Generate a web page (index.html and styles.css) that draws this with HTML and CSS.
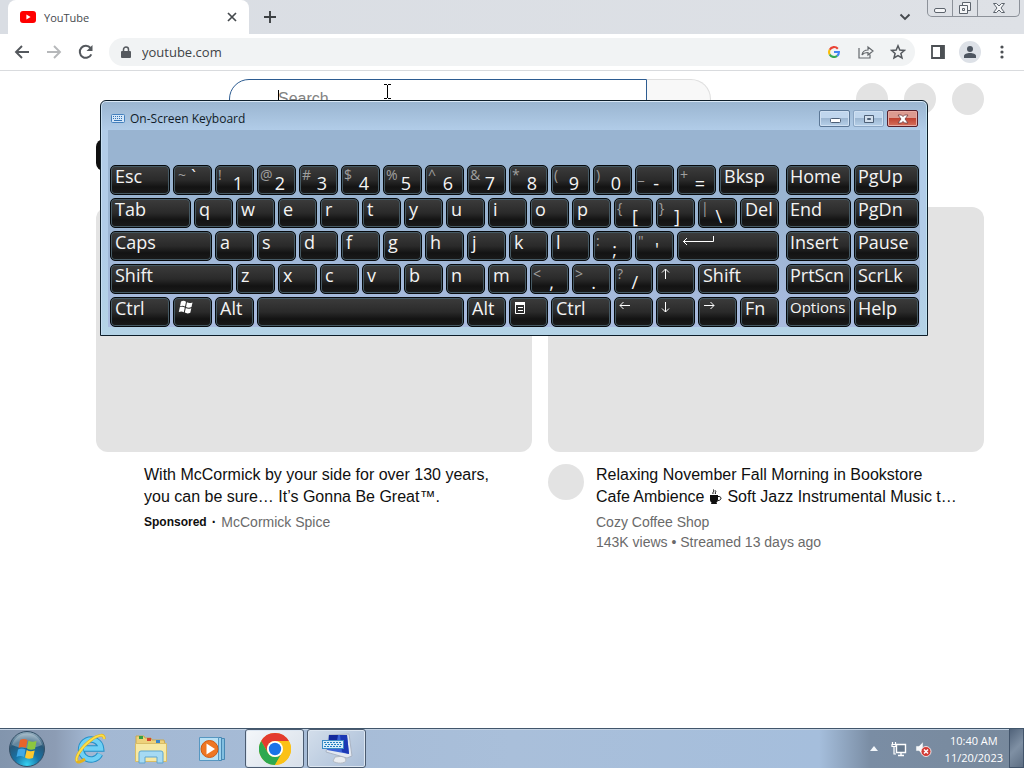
FILE: index.html
```html
<!DOCTYPE html>
<html lang="en">
<head>
<meta charset="utf-8">
<title>YouTube</title>
<link rel="stylesheet" href="styles.css">
</head>
<body>
<div class="desktop">
  <header class="tab-strip">
    <div class="tab">
      <svg class="tab-logo" width="16" height="12" viewBox="0 0 16 12"><rect width="16" height="12" rx="3" fill="#f00"/><path d="M6.4 3.5 10.6 6 6.4 8.500z" fill="#fff"/></svg>
      <span class="tab-title">YouTube</span>
      <button class="icon-btn" aria-label="Close tab"><svg width="10" height="10" viewBox="0 0 10 10"><path d="M1 1l8 8M9 1l-8 8" stroke="#45494d" stroke-width="1.7"/></svg></button>
    </div>
    <button class="icon-btn new-tab" aria-label="New tab"><svg width="14" height="14" viewBox="0 0 14 14"><path d="M7 1v12M1 7h12" stroke="#3c4043" stroke-width="1.900"/></svg></button>
    <button class="icon-btn tab-search" aria-label="Search tabs"><svg width="12" height="8" viewBox="0 0 12 8"><path d="M1.500 1.500 6 6l4.500-4.500" fill="none" stroke="#45494d" stroke-width="1.900"/></svg></button>
    <div class="caption-buttons">
      <button class="caption" aria-label="Minimize"><svg width="14" height="16" viewBox="0 0 14 16"><rect x="1.500" y="8.500" width="11" height="4" rx="1.500" fill="#f5f6f8" stroke="#5d646d"/></svg></button>
      <button class="caption" aria-label="Restore"><svg width="14" height="16" viewBox="0 0 14 16"><path d="M4.500 2.500h8v8h-8z" fill="#f5f6f8" stroke="#5d646d"/><path d="M1.500 5.500h8v8h-8z" fill="#f5f6f8" stroke="#5d646d"/><path d="M4.500 8.500h2v2h-2z" fill="none" stroke="#5d646d"/></svg></button>
      <button class="caption caption-close" aria-label="Close"><svg width="14" height="16" viewBox="0 0 14 16"><path d="M1.500 3.500h3L7 6l2.500-2.500h3L9 8l3.500 4.500h-3L7 10l-2.500 2.500h-3L5 8z" fill="#f5f6f8" stroke="#5d646d"/></svg></button>
    </div>
  </header>

  <nav class="toolbar">
    <button class="icon-btn tool" aria-label="Back"><svg width="16" height="14" viewBox="0 0 16 14"><path d="M15 7H2M8 1 2 7l6 6" fill="none" stroke="#54585d" stroke-width="1.900"/></svg></button>
    <button class="icon-btn tool" aria-label="Forward"><svg width="16" height="14" viewBox="0 0 16 14"><path d="M1 7h13M8 1l6 6-6 6" fill="none" stroke="#b6b8ba" stroke-width="1.900"/></svg></button>
    <button class="icon-btn tool" aria-label="Reload"><svg width="16" height="16" viewBox="0 0 16 16"><path d="M13.300 10.300A6 6 0 1 1 12.500 4" fill="none" stroke="#54585d" stroke-width="2"/><path d="M14.500 1v6h-6z" fill="#54585d"/></svg></button>
    <div class="omnibox">
      <svg width="10" height="13" viewBox="0 0 10 13"><path d="M2.500 5.500V3.500a2.500 2.500 0 0 1 5 0v2" fill="none" stroke="#55595e" stroke-width="1.500"/><rect x="0" y="5" width="10" height="7" rx="1" fill="#55595e"/></svg>
      <input class="url" aria-label="Address" value="youtube.com">
      <button class="icon-btn tool" aria-label="Search with Google"><svg width="12" height="12" viewBox="0 0 12 12" fill="none" stroke-width="2.100"><path d="M9.800 2.700A5 5 0 0 0 1.700 3.700" stroke="#ea4335"/><path d="M1.700 3.700a5 5 0 0 0 0 4.700" stroke="#fbbc05"/><path d="M1.700 8.400a5 5 0 0 0 7.500 1.500" stroke="#34a853"/><path d="M9.200 9.900A5 5 0 0 0 10.900 6H6" stroke="#4285f4"/></svg></button>
      <button class="icon-btn tool" aria-label="Share"><svg width="16" height="14" viewBox="0 0 16 14"><path d="M1 3v10h11V9.500M4 10c.5-3.500 2.500-5 6-5V2l5 4-5 4V7.500C7.500 7.500 5.500 8 4 10z" fill="none" stroke="#64686c" stroke-width="1.200"/></svg></button>
      <button class="icon-btn tool" aria-label="Bookmark"><svg width="16" height="16" viewBox="0 0 16 16"><path d="M8 1.800l1.800 4.200 4.600.4-3.500 3 1.100 4.500L8 11.500l-4 2.400 1.100-4.500-3.500-3L6.200 6z" fill="none" stroke="#54585d" stroke-width="1.500"/></svg></button>
    </div>
    <button class="icon-btn tool" aria-label="Side panel"><svg width="14" height="14" viewBox="0 0 14 14"><path d="M1 1h12v12H1z" fill="none" stroke="#4c5054" stroke-width="1.800"/><path d="M9 1h4v12H9z" fill="#4c5054"/></svg></button>
    <button class="icon-btn tool" aria-label="Profile"><svg width="22" height="22" viewBox="0 0 22 22"><circle cx="11" cy="11" r="11" fill="#dde1e7"/><circle cx="11" cy="8" r="3" fill="#4d5560"/><path d="M5 17v-2c0-2 3-3 6-3s6 1 6 3v2z" fill="#4d5560"/></svg></button>
    <button class="icon-btn tool" aria-label="Menu"><svg width="4" height="14" viewBox="0 0 4 14" fill="#4c5054"><circle cx="2" cy="2" r="1.600"/><circle cx="2" cy="7" r="1.600"/><circle cx="2" cy="12" r="1.600"/></svg></button>
  </nav>

  <main class="page">
    <div class="masthead">
      <form class="search">
        <input class="search-input" aria-label="Search" placeholder="Search">
        <button class="search-btn" type="button" aria-label="Submit search"></button>
      </form>
      <div class="dots"><span class="dot"></span><span class="dot"></span><span class="dot"></span></div>
    </div>
    <div class="chips"><button class="chip">All</button></div>
    <section class="videos">
      <article class="video">
        <div class="thumb"></div>
        <div class="details">
          <span class="avatar avatar-blank"></span>
          <div class="info">
            <h3 class="title">With McCormick by your side for over 130 years, you can be sure… It’s Gonna Be Great™.</h3>
            <p class="meta"><b class="sponsored">Sponsored</b><b>·</b><span>McCormick Spice</span></p>
          </div>
        </div>
      </article>
      <article class="video">
        <div class="thumb"></div>
        <div class="details">
          <span class="avatar"></span>
          <div class="info">
            <h3 class="title">Relaxing November Fall Morning in Bookstore Cafe Ambience <svg class="cup" width="14" height="16" viewBox="0 0 14 16"><path d="M1 6h8v4.500a3 3 0 0 1-1.500 3l.5 1.500H2l.5-1.500A3 3 0 0 1 1 10.500z" fill="#0f0f0f"/><path d="M9 7.500c4-.5 4 4 0 4M4 5c-1-2 2-2 .5-4.500M6.500 5c-1-1.500 1-2 0-3.500" fill="none" stroke="#0f0f0f"/></svg> Soft Jazz Instrumental Music t…</h3>
            <p class="meta">Cozy Coffee Shop</p>
            <p class="meta meta-next">143K views • Streamed 13 days ago</p>
          </div>
        </div>
      </article>
    </section>
    <span class="caret"></span>
    <svg class="ibeam" width="9" height="17" viewBox="0 0 9 17"><path d="M1 1.500h3M5 1.500h3M4.500 2v13M1 15.500h3M5 15.500h3" stroke="#000" fill="none"/></svg>
  </main>

  <section class="osk" aria-label="On-Screen Keyboard">
    <div class="osk-bar">
      <svg width="14" height="9" viewBox="0 0 14 9"><rect x=".5" y=".5" width="13" height="8" rx="1" fill="#d4e6f8" stroke="#4580bd"/><path d="M2 2.500h10M2 4.500h10" stroke="#3474b5" stroke-dasharray="1 1"/><path d="M3 6.500h8" stroke="#3474b5"/></svg>
      <span class="osk-title">On-Screen Keyboard</span>
      <button class="osk-btn" aria-label="Minimize"><svg width="12" height="12" viewBox="0 0 12 12"><rect x="1.500" y="5.500" width="10" height="4" rx="1" fill="#fff" stroke="#4d5f76"/></svg></button>
      <button class="osk-btn osk-max" aria-label="Maximize"><svg width="12" height="12" viewBox="0 0 12 12"><path d="M1.500 2.500h9v7h-9z" fill="#d3e0ee" stroke="#4d5f76"/><path d="M4.500 5.500h3v1h-3z" fill="#fff" stroke="#4d5f76"/></svg></button>
      <button class="osk-btn osk-close" aria-label="Close"><svg width="12" height="12" viewBox="0 0 12 12"><path d="M1 2h3.500L6 3.600 7.500 2H11L8 6l3 4H7.500L6 8.400 4.500 10H1l3-4z" fill="#fff" stroke="#6b3a40" stroke-width=".8"/></svg></button>
    </div>
    <div class="osk-body">
      <div class="keys">
        <button class="key w3">Esc</button><button class="key flat"><small>~</small><span>`</span></button><button class="key dual"><small>!</small><span>1</span></button><button class="key dual"><small>@</small><span>2</span></button><button class="key dual"><small>#</small><span>3</span></button><button class="key dual"><small>$</small><span>4</span></button><button class="key dual"><small>%</small><span>5</span></button><button class="key dual"><small>^</small><span>6</span></button><button class="key dual"><small>&amp;</small><span>7</span></button><button class="key dual"><small>*</small><span>8</span></button><button class="key dual"><small>(</small><span>9</span></button><button class="key dual"><small>)</small><span>0</span></button><button class="key dual punct"><small>_</small><span>-</span></button><button class="key dual"><small>+</small><span>=</span></button><button class="key w3">Bksp</button>
        <button class="key w4">Tab</button><button class="key">q</button><button class="key">w</button><button class="key">e</button><button class="key">r</button><button class="key">t</button><button class="key">y</button><button class="key">u</button><button class="key">i</button><button class="key">o</button><button class="key">p</button><button class="key dual punct"><small>{</small><span>[</span></button><button class="key dual punct"><small>}</small><span>]</span></button><button class="key dual punct"><small>|</small><span>\</span></button><button class="key">Del</button>
        <button class="key w5">Caps</button><button class="key">a</button><button class="key">s</button><button class="key">d</button><button class="key">f</button><button class="key">g</button><button class="key">h</button><button class="key">j</button><button class="key">k</button><button class="key">l</button><button class="key dual punct"><small>:</small><span>;</span></button><button class="key dual punct"><small>"</small><span>'</span></button><button class="key w5" aria-label="Enter"><svg width="32" height="18" viewBox="0 0 32 18"><path d="M31.500 4v5.500H1M5 6 1.500 9.500 5 13" fill="none" stroke="#fff"/></svg></button>
        <button class="key w6">Shift</button><button class="key">z</button><button class="key">x</button><button class="key">c</button><button class="key">v</button><button class="key">b</button><button class="key">n</button><button class="key">m</button><button class="key dual punct"><small>&lt;</small><span>,</span></button><button class="key dual punct"><small>&gt;</small><span>.</span></button><button class="key dual punct"><small>?</small><span>/</span></button><button class="key" aria-label="Up"><svg width="10" height="18" viewBox="0 0 10 18"><path d="M4.500 14V4M1 7.500 4.500 4 8 7.500" fill="none" stroke="#fff"/></svg></button><button class="key w4">Shift</button>
        <button class="key w3">Ctrl</button><button class="key" aria-label="Windows"><svg width="16" height="18" viewBox="0 0 16 18" fill="#fff"><path d="M3 3.500c2-1 3.500-.8 5 .2L7 8.500c-1.500-1-3-1-5-.3zM9 4.200c1.500 1 3.200 1 5.500.2l-1 4.700c-2 .8-4 .7-5.500-.2zM1.800 9.200c2-.8 3.500-.6 5 .3l-1 4.700c-1.500-1-3-1-5-.3zM7.800 10c1.500.9 3.500 1 5.500.2l-1 4.600c-2 .9-4 .8-5.500-.2z"/></svg></button><button class="key">Alt</button><button class="key w10" aria-label="Space"></button><button class="key">Alt</button><button class="key" aria-label="Menu"><svg width="12" height="18" viewBox="0 0 12 18"><path d="M1.500 4.500h9v11h-9zM1 6h10" fill="none" stroke="#fff"/><path d="M1 4h10v3H1z" fill="#fff"/><path d="M4 9.500h5M4 12.500h5" stroke="#fff"/></svg></button><button class="key w3">Ctrl</button><button class="key" aria-label="Left"><svg width="12" height="18" viewBox="0 0 12 18"><path d="M11 7.500H1M4.500 4 1 7.500 4.500 11" fill="none" stroke="#fff"/></svg></button><button class="key" aria-label="Down"><svg width="10" height="18" viewBox="0 0 10 18"><path d="M4.500 4v10M1 10.500 4.500 14 8 10.500" fill="none" stroke="#fff"/></svg></button><button class="key" aria-label="Right"><svg width="12" height="18" viewBox="0 0 12 18"><path d="M1 7.500h10M7.500 4 11 7.500 7.500 11" fill="none" stroke="#fff"/></svg></button><button class="key">Fn</button>
      </div>
      <div class="nav-keys">
        <button class="key">Home</button><button class="key">PgUp</button>
        <button class="key">End</button><button class="key">PgDn</button>
        <button class="key">Insert</button><button class="key">Pause</button>
        <button class="key">PrtScn</button><button class="key">ScrLk</button>
        <button class="key key-small">Options</button><button class="key">Help</button>
      </div>
    </div>
  </section>

  <footer class="taskbar">
    <button class="task start" aria-label="Start">
      <svg width="38" height="38" viewBox="0 0 38 38"><defs><radialGradient id="orb" cx=".5" cy=".95" r=".9"><stop offset="0" stop-color="#35d2f2"/><stop offset=".4" stop-color="#1873a6"/><stop offset=".75" stop-color="#285878"/><stop offset="1" stop-color="#8aa6b8"/></radialGradient></defs><circle cx="19" cy="19" r="17.500" fill="url(#orb)" stroke="#344f66"/><path d="M4 15a15.500 15.500 0 0 1 30 0c-8 4-22 4-30 0z" fill="#fff" opacity=".28"/><path d="M12 10c2.500-1.500 5-1.500 7.500 0L18 18c-2.500-1.500-5-1.500-7.500 0z" fill="#e9642a"/><path d="M20.500 10.500c2.500 1.500 5 1.500 8 .5l-1.500 8c-3 1-5.500 1-8-.5z" fill="#8cc63f"/><path d="M10 19.500c2.500-1.500 5-1.500 7.500 0L16 27c-2.500-1.500-5-1.500-7.500 0z" fill="#3fa9e6"/><path d="M18.700 20c2.500 1.500 5 1.500 8 .5L25 28c-3 1-5.500 1-8-.5z" fill="#fdc82f"/></svg>
    </button>
    <button class="task" aria-label="Internet Explorer">
      <svg width="34" height="34" viewBox="0 0 34 34"><path d="M27 22a10 10 0 1 1 1-5.500H11" fill="none" stroke="#2390c8" stroke-width="6.500"/><path d="M27 22a10 10 0 1 1 1-5.500H11" fill="none" stroke="#6fd0f5" stroke-width="4.500"/><path d="M31 7c1-5-5-5-13 1C8 15 2 26 4 29c1 2 4 1 8-2" fill="none" stroke="#e4b21c" stroke-width="3"/><path d="M31 7c1-5-5-5-13 1C8 15 2 26 4 29" fill="none" stroke="#fbe04c" stroke-width="1.700"/></svg>
    </button>
    <button class="task" aria-label="Explorer">
      <svg width="34" height="32" viewBox="0 0 34 32"><path d="M2 6V3h8l1 2h6l1 2h12l1 4v17H2z" fill="#eed27b" stroke="#c9a850"/><path d="M5 3h4v3H5z" fill="#35a044"/><path d="M13 5h4v3h-4z" fill="#d5452e"/><path d="M22 7h4v3h-4z" fill="#3b86c8"/><path d="M1.500 10.500h31v18h-31z" fill="#f7e9a4" stroke="#d9bd66"/><path d="M5 30V20q0-2 2-2h20q2 0 2 2v10h-6v-6H11v6z" fill="#a6daf3" stroke="#5ea5cf"/></svg>
    </button>
    <button class="task" aria-label="Media Player">
      <svg width="28" height="28" viewBox="0 0 28 28"><path d="M6.500 3.500h20v21h-20z" fill="#82bfe0" stroke="#4788b4"/><path d="M3.500 2.500h20v23h-20z" fill="#9dd2ee" stroke="#4788b4"/><path d="M1.500 2.500h19v23h-19z" fill="#b9e1f5" stroke="#5797c1"/><circle cx="11.500" cy="14" r="8.500" fill="#ee7623" stroke="#cf5a13"/><path d="M8.500 8.500 17 14l-8.500 5.500z" fill="#fff"/></svg>
    </button>
    <button class="task task-open task-active" aria-label="Chrome">
      <svg width="32" height="32" viewBox="0 0 32 32"><circle cx="16" cy="16" r="16" fill="#fbc116"/><path d="M2.140 8A16 16 0 0 1 29.860 8H16a8 8 0 0 0-6.930 12z" fill="#e33b2e"/><path d="M2.140 8A16 16 0 0 0 16 32l6.930-12A8 8 0 0 1 9.070 20z" fill="#2da94f"/><path d="M29.860 8A16 16 0 0 1 16 32l6.930-12A8 8 0 0 0 22.930 12 8 8 0 0 0 16 8z" fill="#fbc116"/><circle cx="16" cy="16" r="8" fill="#fff"/><circle cx="16" cy="16" r="6.200" fill="#1a73e8"/></svg>
    </button>
    <button class="task task-open" aria-label="On-Screen Keyboard">
      <svg width="32" height="32" viewBox="0 0 32 32"><path d="M14 24l9-1 2 4c0 4-10 4-13 1z" fill="#e9ecf0" stroke="#b4bac2"/><path d="M8 2l20-1 3 22-5 2-21-6z" fill="#e3e8f0" stroke="#aab4c4"/><path d="M8 2h18l2 19-22-4z" fill="#3b63d6"/><path d="M8 2h9l-1 6H8z" fill="#142a9c"/><path d="M19 2h7l2 19-7-2z" fill="#1c38b4"/><rect x="1.500" y="7.500" width="21" height="8" fill="#d8edf9" stroke="#3b8bc4"/><path d="M3 9.500h18M4 11.500h17M3 13.500h18" stroke="#2380c0" stroke-width="1.200" stroke-dasharray="2 1"/></svg>
    </button>
    <div class="tray">
      <button class="icon-btn" aria-label="Show hidden icons"><svg width="8" height="5" viewBox="0 0 8 5"><path d="M0 5 4 0l4 5z" fill="#f2f6fa"/></svg></button>
      <svg width="16" height="16" viewBox="0 0 16 16"><path d="M5.500 3.500h9v8h-9zM10 12v2M7 14.500h6" fill="#66788c" stroke="#fff" stroke-width="1.400"/><path d="M1.500 1v2M4.500 1v2M1 3.500h4v2H1zM3 6v7h2" fill="none" stroke="#fff" stroke-width="1.200"/></svg>
      <svg width="17" height="16" viewBox="0 0 17 16"><path d="M1 5h3l4-4v13l-4-4H1z" fill="#f5f7fa" stroke="#8594a5" stroke-width=".5"/><circle cx="11" cy="10.500" r="5" fill="#d23b35" stroke="#fff" stroke-width=".8"/><path d="M9 8.500l4 4M13 8.500l-4 4" stroke="#fff" stroke-width="1.500"/></svg>
      <div class="clock"><span>10:40 AM</span><span>11/20/2023</span></div>
    </div>
    <button class="show-desktop" aria-label="Show desktop"></button>
  </footer>
</div>
</body>
</html>
```
FILE: styles.css
```css
* { box-sizing: border-box; }
body { margin: 0; font-family: "Liberation Sans", Arial, sans-serif; color: #0f0f0f; }
button, input { font: inherit; color: inherit; margin: 0; padding: 0; border: 0; background: none; outline: 0; }
svg { display: block; flex: none; }
h3, p { margin: 0; font-weight: 400; }

.desktop { position: relative; display: flex; flex-direction: column; height: 100vh; overflow: hidden; background: #fff; }
.icon-btn { display: flex; align-items: center; justify-content: center; flex: none; }

/* Browser tabs */
.tab-strip { display: flex; align-items: center; height: 34px; padding: 0 4px 0 8px; background: linear-gradient(90deg, #d9dde3, #dee1e6); font-family: "Open Sans", "Noto Sans", sans-serif; flex: none; }
.tab { display: flex; align-items: center; gap: 8px; width: 241px; height: 34px; padding: 0 12px; background: #fff; border-radius: 8px 8px 0 0; font-size: 11px; color: #45494d; }
.tab-title { flex: 1; }
.new-tab { width: 42px; }
.tab-search { margin-left: auto; margin-right: 16px; }
.caption-buttons { display: flex; align-self: flex-start; height: 17px; border: 1px solid #8c9199; border-top: 0; border-radius: 0 0 5px 5px; }
.caption { display: flex; align-items: center; justify-content: center; width: 25px; border-right: 1px solid #8c9199; }
.caption-close { width: 41px; border: 0; }

/* Toolbar */
.toolbar { display: flex; align-items: center; height: 37px; padding: 0 6px; border-bottom: 1px solid #d9dbde; background: #fff; flex: none; }
.tool { width: 32px; height: 28px; }
.omnibox { display: flex; align-items: center; flex: 1; height: 28px; margin: 0 7px; padding: 0 1px 0 12px; border-radius: 14px; background: #f1f3f4; }
.url { flex: 1; min-width: 0; margin-left: 11px; font: 13px "Open Sans", "Noto Sans", sans-serif; color: #3f4347; }

/* Page */
.page { position: relative; flex: 1; min-height: 0; padding: 8px 40px 0 96px; }
.masthead { display: flex; justify-content: space-between; align-items: center; padding-left: 133px; height: 40px; }
.search { display: flex; flex: 0 1 482px; height: 40px; }
.search-input { flex: 1; min-width: 0; padding: 0 48px; border: 1px solid #2d5c91; border-radius: 20px 0 0 20px; font-size: 16px; }
.search-input::placeholder { color: #828282; opacity: 1; }
.search-btn { width: 64px; border: 1px solid #dfdfdf; border-left: 0; border-radius: 0 20px 20px 0; background: #f8f8f8; }
.dots { display: flex; gap: 16px; }
.dot { width: 32px; height: 32px; border-radius: 50%; background: #e3e3e3; }
.chips { padding-top: 20px; height: 88px; }
.chip { height: 32px; padding: 0 12px; border-radius: 8px; background: #0f0f0f; color: #fff; font-size: 14px; }
.videos { display: grid; grid-template-columns: 1fr 1fr; gap: 16px; }
.thumb { aspect-ratio: 16 / 9; border-radius: 12px; background: #e3e3e3; }
.details { display: flex; gap: 12px; padding: 12px 24px 0 0; }
.avatar { flex: none; width: 36px; height: 36px; border-radius: 50%; background: #e3e3e3; }
.avatar-blank { background: none; }
.title { font-size: 16px; line-height: 22px; }
.cup { display: inline-block; vertical-align: -3px; }
.meta { display: flex; align-items: center; gap: 5px; margin-top: 4px; font-size: 14px; line-height: 20px; color: #6a6a6a; }
.meta-next { margin-top: 0; }
.meta b { color: #0f0f0f; }
.sponsored { font-size: 12px; }
.caret { position: absolute; left: 278px; top: 19px; width: 1px; height: 18px; background: #000; }
.ibeam { position: absolute; left: 383px; top: 12px; }

/* On-screen keyboard window */
.osk { position: absolute; top: 100px; left: 100px; right: 96px; padding: 0 7px 8px; border: 1px solid #0d1d29; border-radius: 6px 6px 0 0; background: linear-gradient(180deg, #9ab5d0, #b1cce8 29px, #b1cce8 60%, #b4d3e6); box-shadow: inset 0 1px 0 #d9e8f6, inset 1px 0 0 #c6def2, inset -1px 0 0 #bfe0ee; }
.osk-bar { display: flex; align-items: center; gap: 3px; height: 29px; padding: 6px 2px 0 3px; }
.osk-title { flex: 1; margin-left: 2px; font: 12px "Open Sans", "Noto Sans", sans-serif; color: #101c28; }
.osk-btn { display: flex; align-items: center; justify-content: center; width: 31px; height: 17px; border: 1px solid #5b7796; border-radius: 2px; background: linear-gradient(#c0d6ed 45%, #9db7d2 50%, #b6d0e9); box-shadow: inset 0 0 0 1px #cfe0f2; }
.osk-max { border-color: #8ba6c4; }
.osk-close { border-color: #571f2b; background: linear-gradient(#dc9a90 45%, #c04332 50%, #d5705c); box-shadow: inset 0 0 0 1px #e8aba3; }
.osk-body { display: grid; grid-template-columns: 669fr 133fr; gap: 7px; padding: 35px 1px 0 2px; background: linear-gradient(#99b4d1 40%, #a9bbdf); }
.keys { display: grid; grid-template-columns: repeat(32, minmax(0, 1fr)); grid-auto-rows: 30px; gap: 3px; }
.nav-keys { display: grid; grid-template-columns: repeat(2, minmax(0, 1fr)); grid-auto-rows: 30px; gap: 3px; }
.key { display: flex; align-items: flex-start; min-width: 0; padding: 0 3px; border: 1px solid #06090c; border-radius: 5px; background: linear-gradient(#3c3c3c, #2a2a2a 50%, #131313 75%, #1a1a1a); box-shadow: inset 0 0 0 1px #465a64; color: #f4f4f4; font: 18px/20px "Open Sans", "Noto Sans", sans-serif; white-space: nowrap; }
.keys .key { grid-column: span 2; padding: 0 4px; }
.keys .w3 { grid-column: span 3; }
.keys .w4 { grid-column: span 4; }
.keys .w5 { grid-column: span 5; }
.keys .w6 { grid-column: span 6; }
.keys .w10 { grid-column: span 10; }
.key small { font-size: 14px; line-height: 18px; color: #a0a0a0; }
.keys .dual { justify-content: space-between; padding: 0 10px 0 2px; }
.keys .punct { padding-right: 14px; }
.dual span { padding-top: 7px; }
.flat { gap: 5px; }
.key-small { font-size: 15px; line-height: 18px; }

/* Taskbar */
.taskbar { display: flex; align-items: stretch; height: 40px; flex: none; border-top: 1px solid #41566b; background: linear-gradient(90deg, #8295ad, #8c9cb4 55px, #a3b8d3 90px, #a9bfda 50%, #a5bedc 80%, #7a8da4 85%, #78899c); box-shadow: inset 0 1px 0 #c4d3e4; }
.task { display: flex; align-items: center; justify-content: center; width: 61px; }
.start { width: 54px; margin-right: 5px; }
.task-open { width: 59px; margin-left: 3px; border: 1px solid #4b5b70; border-radius: 3px; background: linear-gradient(135deg, #d3deeb, #a9bdd7); box-shadow: inset 0 0 0 1px #dce6f1; }
.task-active { background: linear-gradient(135deg, #f4f7fa, #d7dfe9); }
.tray { display: flex; align-items: center; gap: 8px; margin-left: auto; padding-right: 6px; }
.tray .icon-btn { margin-right: 5px; }
.clock { display: flex; flex-direction: column; align-items: center; margin-left: 5px; font: 11px/17px "Open Sans", "Noto Sans", sans-serif; color: #fff; }
.show-desktop { width: 15px; border: 1px solid #42546a; border-top: 0; background: linear-gradient(135deg, #51637a, #7f90a4 50%, #5d6e83); }
```
